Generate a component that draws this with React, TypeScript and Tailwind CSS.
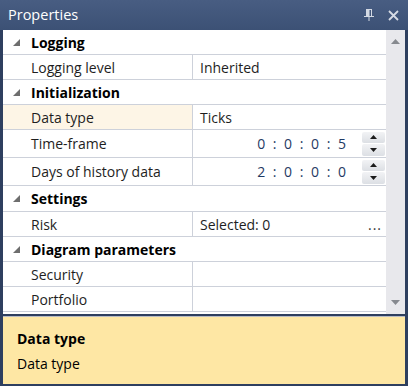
import React from 'react';

// Properties panel (VS-like property grid)

type Row =
  | { kind: 'header'; label: string; h?: string }
  | { kind: 'prop'; label: string; value?: string; spin?: boolean; dots?: boolean; selected?: boolean; h?: string };

const rows: Row[] = [
  { kind: 'header', label: 'Logging' },
  { kind: 'prop', label: 'Logging level', value: 'Inherited' },
  { kind: 'header', label: 'Initialization' },
  { kind: 'prop', label: 'Data type', value: 'Ticks', selected: true },
  { kind: 'prop', label: 'Time-frame', value: '0 : 0 : 0 : 5', spin: true, h: 'h-[28px]' },
  { kind: 'prop', label: 'Days of history data', value: '2 : 0 : 0 : 0', spin: true, h: 'h-[28px]' },
  { kind: 'header', label: 'Settings', h: 'h-[26px]' },
  { kind: 'prop', label: 'Risk', value: 'Selected: 0', dots: true },
  { kind: 'header', label: 'Diagram parameters' },
  { kind: 'prop', label: 'Security' },
  { kind: 'prop', label: 'Portfolio' },
];

function Triangle() {
  return (
    <svg width="9" height="9" viewBox="0 0 9 9" className="shrink-0">
      <path d="M8 1 L8 8 L1 8 Z" fill="#6e6e6e" />
    </svg>
  );
}

function Spinner() {
  return (
    <div className="flex flex-col w-[23px] h-[24px] gap-[1px]">
      <div className="flex-1 flex items-center justify-center bg-gradient-to-b from-[#f2f3f5] to-[#dcdfe4] rounded-[2px]">
        <svg width="7" height="4" viewBox="0 0 7 4"><path d="M0 4 L3.5 0 L7 4 Z" fill="#1b1b1b" /></svg>
      </div>
      <div className="flex-1 flex items-center justify-center bg-gradient-to-b from-[#f2f3f5] to-[#dcdfe4] rounded-[2px]">
        <svg width="7" height="4" viewBox="0 0 7 4"><path d="M0 0 L3.5 4 L7 0 Z" fill="#1b1b1b" /></svg>
      </div>
    </div>
  );
}

export default function App() {
  return (
    <div
      className="w-[408px] h-[386px] bg-[#2e3f5f] flex flex-col text-[14px] text-[#1e1e1e]"
      style={{ fontFamily: '"Open Sans", "Noto Sans", sans-serif' }}
    >
      {/* title bar */}
      <div className="h-[30px] shrink-0 flex items-center bg-gradient-to-b from-[#485d82] to-[#3c5175] pl-[8px] pr-[9px]">
        <span className="text-white text-[14.5px] leading-none">Properties</span>
        <div className="ml-auto flex items-center gap-[14px]">
          <svg width="10" height="12" viewBox="0 0 10 12">
            <path d="M2 0 H8 V7 H10 V8 H5.5 V12 H4.5 V8 H0 V7 H2 Z M5.5 1 V7 H7 V1 Z" fill="#d3d9e3" fillRule="evenodd" />
          </svg>
          <svg width="11" height="11" viewBox="0 0 11 11">
            <path d="M1 1 L10 10 M10 1 L1 10" stroke="#d6dbe4" strokeWidth="1.8" />
          </svg>
        </div>
      </div>

      {/* grid + scrollbar */}
      <div className="mx-[3px] flex h-[284px] shrink-0 bg-white">
        <div className="flex-1 flex flex-col">
          {rows.map((r, i) =>
            r.kind === 'header' ? (
              <div key={i} className={`${r.h ?? 'h-[25px]'} shrink-0 flex items-center border-b border-[#cdd1da] pl-[9px] gap-[10px]`}>
                <Triangle />
                <span className="font-bold text-black">{r.label}</span>
              </div>
            ) : (
              <div key={i} className={`${r.h ?? 'h-[25px]'} shrink-0 flex border-b border-[#cdd1da]`}>
                <div
                  className={`w-[190px] shrink-0 flex items-center pl-[28px] border-r border-[#cdd1da] ${
                    r.selected ? 'bg-[#fdf5e6]' : ''
                  }`}
                >
                  {r.label}
                </div>
                <div className="flex-1 flex items-center pl-[7px] pr-[1px]">
                  {r.spin ? (
                    <>
                      <span className="ml-auto text-[#1f3a64] whitespace-pre tracking-[2px]">{r.value}</span>
                      <div className="ml-[14px]">
                        <Spinner />
                      </div>
                    </>
                  ) : (
                    <>
                      <span>{r.value}</span>
                      {r.dots && <span className="ml-auto mr-[3px] text-[#333] tracking-[1px]">...</span>}
                    </>
                  )}
                </div>
              </div>
            )
          )}
        </div>
        {/* scrollbar */}
        <div className="w-[19px] shrink-0 bg-[#e8e8ec] flex flex-col items-center justify-between py-[9px]">
          <svg width="9" height="5" viewBox="0 0 9 5"><path d="M0 5 L4.5 0 L9 5 Z" fill="#86898f" /></svg>
          <svg width="9" height="5" viewBox="0 0 9 5"><path d="M0 0 L4.5 5 L9 0 Z" fill="#86898f" /></svg>
        </div>
      </div>

      {/* description panel */}
      <div className="mx-[3px] mt-[2px] h-[68px] shrink-0 bg-[#fee7a4] border-t border-[#b9bcc4] px-[14px] pt-[12px] flex flex-col gap-[6px]">
        <div className="font-bold text-black leading-[19px]">Data type</div>
        <div className="text-black leading-[19px]">Data type</div>
      </div>
    </div>
  );
}
